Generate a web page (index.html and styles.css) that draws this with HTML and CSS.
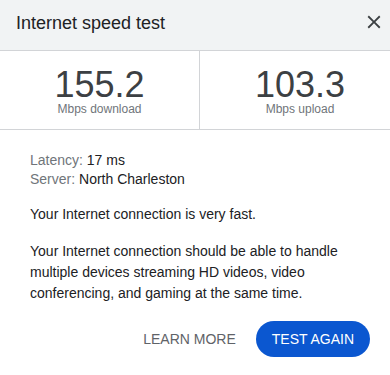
FILE: index.html
```html
<!DOCTYPE html>
<html>
<head>
<meta charset="utf-8">
<link rel="stylesheet" href="styles.css">
</head>
<body>
<div class="panel">
  <div class="header">
    <div class="title">Internet speed test</div>
    <svg class="close" width="22" height="22" viewBox="0 0 24 24"><path d="M19 6.41L17.59 5 12 10.59 6.41 5 5 6.41 10.59 12 5 17.59 6.41 19 12 13.41 17.59 19 19 17.59 13.41 12z" fill="#3c4043"/></svg>
  </div>
  <div class="stats">
    <div class="stat stat-left">
      <div class="num">155.2</div>
      <div class="unit">Mbps download</div>
    </div>
    <div class="stat">
      <div class="num">103.3</div>
      <div class="unit">Mbps upload</div>
    </div>
  </div>
  <div class="content">
    <div class="meta"><span class="lbl">Latency:</span> 17 ms</div>
    <div class="meta"><span class="lbl">Server:</span> North Charleston</div>
    <p class="verdict">Your Internet connection is very fast.</p>
    <p class="desc">Your Internet connection should be able to handle multiple devices streaming HD videos, video conferencing, and gaming at the same time.</p>
  </div>
  <div class="actions">
    <span class="learn">LEARN MORE</span>
    <span class="again">TEST AGAIN</span>
  </div>
</div>
</body>
</html>
```
FILE: styles.css
```css
html, body {
  margin: 0;
  padding: 0;
  background: #fff;
}
body {
  font-family: Arial, "Liberation Sans", sans-serif;
  color: #202124;
}
.panel {
  width: 390px;
  overflow: hidden;
}
.header {
  box-sizing: border-box;
  height: 51px;
  background: #f1f3f4;
  border-bottom: 1px solid #d2d4d7;
  display: flex;
  justify-content: space-between;
  align-items: flex-start;
  padding: 12px 5px 0 16px;
}
.title {
  font-size: 18px;
  line-height: 22px;
  color: #202124;
}
.close {
  margin-top: -1px;
}
.stats {
  width: 400px;
  box-sizing: border-box;
  height: 79px;
  border-bottom: 1px solid #d2d4d7;
  display: grid;
  grid-template-columns: 200px 200px;
}
.stat {
  text-align: center;
  padding-top: 17px;
}
.stat-left {
  border-right: 1px solid #d2d4d7;
}
.num {
  font-size: 36px;
  line-height: 34px;
  color: #3c4043;
}
.unit {
  font-size: 12px;
  line-height: 14px;
  color: #70757a;
}
.content {
  padding: 21px 20px 0 30px;
  font-size: 14px;
}
.meta {
  line-height: 19px;
}
.lbl {
  color: #70757a;
}
.verdict {
  margin: 15px 0 0;
  line-height: 21px;
}
.desc {
  margin: 16px 0 0;
  line-height: 21px;
}
.actions {
  display: flex;
  justify-content: flex-end;
  align-items: center;
  gap: 20px;
  padding: 17px 20px 0 0;
  font-size: 14px;
}
.learn {
  color: #5f6368;
}
.again {
  display: inline-block;
  background: #0b57d0;
  color: #fff;
  height: 36px;
  line-height: 36px;
  padding: 0 16px;
  border-radius: 18px;
}
```
